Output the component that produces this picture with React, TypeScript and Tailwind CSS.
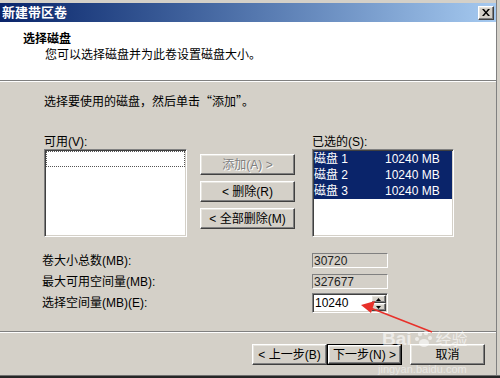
const FONT = "font-[family-name:'Liberation_Sans','Noto_Sans_CJK_SC',sans-serif]";
const CJK = "font-[family-name:'Noto_Sans_CJK_SC',sans-serif]";

const raised =
  "bg-[#D4D0C8] border border-t-white border-l-white border-r-[#404040] border-b-[#404040] shadow-[inset_-1px_-1px_0_#808080,inset_1px_1px_0_#e6e4de]";
const sunken =
  "border border-t-[#808080] border-l-[#808080] border-r-white border-b-white shadow-[inset_1px_1px_0_#404040,inset_-1px_-1px_0_#d4d0c8]";

function Btn({ children, disabled = false, className = "" }: { children: React.ReactNode; disabled?: boolean; className?: string }) {
  return (
    <div className={`${raised} h-[21px] flex items-center justify-center ${className}`}>
      <span className={disabled ? "text-[#808080] [text-shadow:1px_1px_0_#fff]" : "text-black"}>{children}</span>
    </div>
  );
}

const diskRows = [
  { name: "磁盘 1", size: "10240 MB" },
  { name: "磁盘 2", size: "10240 MB" },
  { name: "磁盘 3", size: "10240 MB" },
];

export default function App() {
  return (
    <div className={`relative flex flex-col w-[500px] h-[378px] overflow-hidden bg-[#D4D0C8] text-[12px] leading-[14px] text-black ${FONT}`}>
      <div className="flex h-[375px]">
        {/* window body */}
        <div className="flex flex-col w-[496px]">
          <div className="h-[3px]" />
          {/* title bar */}
          <div className="h-[19px] flex items-center justify-between pl-[2px] pr-[2px] bg-gradient-to-r from-[#0A246A] to-[#A6CAF0]">
            <span className="text-white font-bold text-[13px] leading-[15px]">新建带区卷</span>
            <div className={`${raised} w-[16px] h-[14px] flex items-center justify-center`}>
              <svg width="8" height="7" viewBox="0 0 8 7">
                <path d="M0 0h2l2 2.5L6 0h2L5 3.5 8 7H6L4 4.5 2 7H0l3-3.5z" fill="#000" />
              </svg>
            </div>
          </div>

          {/* header */}
          <div className="h-[58px] bg-white pl-[23px] pt-[10px]">
            <div className="font-bold">选择磁盘</div>
            <div className="pl-[22px] mt-[2px]">您可以选择磁盘并为此卷设置磁盘大小。</div>
          </div>
          <div className="h-[1px] bg-[#808080]" />
          <div className="h-[1px] bg-white" />

          {/* body */}
          <div className="h-[249px] flex flex-col">
            <div className="pl-[44px] pt-[12px]">
              选择要使用的磁盘，然后单击<span className={CJK}>“</span>添加<span className={CJK}>”</span>。
            </div>

            <div className="flex pl-[44px] mt-[26px]">
              <div className="w-[143px] flex flex-col">
                <div className="h-[14px]">可用(V):</div>
                <div className={`${sunken} h-[88px] bg-white p-[1px]`}>
                  <div className="h-[16px] border border-dotted border-[#555]" />
                </div>
              </div>

              <div className="ml-[13px] mt-[19px] w-[95px] flex flex-col gap-[6px]">
                <Btn disabled>添加(A) &gt;</Btn>
                <Btn>&lt; 删除(R)</Btn>
                <Btn>&lt; 全部删除(M)</Btn>
              </div>

              <div className="ml-[17px] w-[142px] flex flex-col">
                <div className="h-[14px]">已选的(S):</div>
                <div className={`${sunken} h-[88px] bg-white p-[1px]`}>
                  {diskRows.map((r) => (
                    <div key={r.name} className="h-[16px] flex items-center bg-[#0A246A] text-white">
                      <span className="w-[71px]">{r.name}</span>
                      <span>{r.size}</span>
                    </div>
                  ))}
                </div>
              </div>
            </div>

            <div className="grid grid-cols-[270px_76px] pl-[42px] mt-[16px]">
              <div className="h-[15px] flex items-center">卷大小总数(MB):</div>
              <div className={`${sunken} h-[15px] flex items-center pl-[1px] text-[#222] shadow-none`}>30720</div>
              <div className="h-[15px] mt-[6px] flex items-center">最大可用空间量(MB):</div>
              <div className={`${sunken} h-[15px] mt-[6px] flex items-center pl-[1px] text-[#222] shadow-none`}>327677</div>
              <div className="h-[20px] mt-[4px] flex items-center">选择空间量(MB)(E):</div>
              <div className={`${sunken} h-[20px] mt-[4px] bg-white flex items-center justify-between pl-[2px] pr-[1px]`}>
                <span>10240</span>
                <div className="flex flex-col">
                  <div className={`${raised} w-[15px] h-[8px] flex items-center justify-center`}>
                    <svg width="5" height="3" viewBox="0 0 5 3"><path d="M2.5 0L5 3H0z" fill="#000" /></svg>
                  </div>
                  <div className={`${raised} w-[15px] h-[8px] flex items-center justify-center`}>
                    <svg width="5" height="3" viewBox="0 0 5 3"><path d="M0 0h5L2.5 3z" fill="#000" /></svg>
                  </div>
                </div>
              </div>
            </div>
          </div>

          <div className="h-[1px] bg-[#808080]" />
          <div className="h-[1px] bg-white" />

          {/* footer */}
          <div className="flex justify-end pr-[11px] pt-[11px]">
            <Btn className="w-[75px]">&lt; 上一步(B)</Btn>
            <div className="w-[75px] h-[21px] border border-black">
              <div className={`${raised} h-[19px] flex items-center justify-center`}>下一步(N) &gt;</div>
            </div>
            <Btn className="w-[75px] ml-[8px]">取消</Btn>
          </div>
        </div>
        {/* right frame */}
        <div className="w-[4px] border-l border-[#808080]" />
      </div>
      <div className="h-[1px] bg-[#6f6f6f]" />
      <div className="h-[2px] bg-[#262626]" />

      {/* red annotation arrow */}
      <svg className="absolute left-0 top-0 pointer-events-none" width="500" height="378" viewBox="0 0 500 378">
        <line x1="368" y1="307" x2="432" y2="332" stroke="#E8302A" strokeWidth="1.5" />
        <path d="M361 305L375 301L371 313z" fill="#E8302A" />
      </svg>

      {/* watermark */}
      <div className="absolute left-[382px] top-[329px] flex items-end gap-[2px] text-white/60 pointer-events-none">
        <span className="text-[19px] leading-[20px] font-bold">Bai</span>
        <svg width="20" height="20" viewBox="0 0 20 20" className="opacity-60">
          <circle cx="6" cy="5" r="2.2" fill="#fff" />
          <circle cx="12" cy="4" r="2.2" fill="#fff" />
          <circle cx="3" cy="10" r="2" fill="#fff" />
          <circle cx="16" cy="9" r="2" fill="#fff" />
          <ellipse cx="10" cy="14" rx="5" ry="4" fill="#fff" />
        </svg>
        <span className="text-[16px] leading-[18px]">经验</span>
      </div>
      <div className="absolute left-[378px] top-[364px] text-[11px] leading-[11px] text-white/50 pointer-events-none">
        jingyan.baidu.com
      </div>
    </div>
  );
}
